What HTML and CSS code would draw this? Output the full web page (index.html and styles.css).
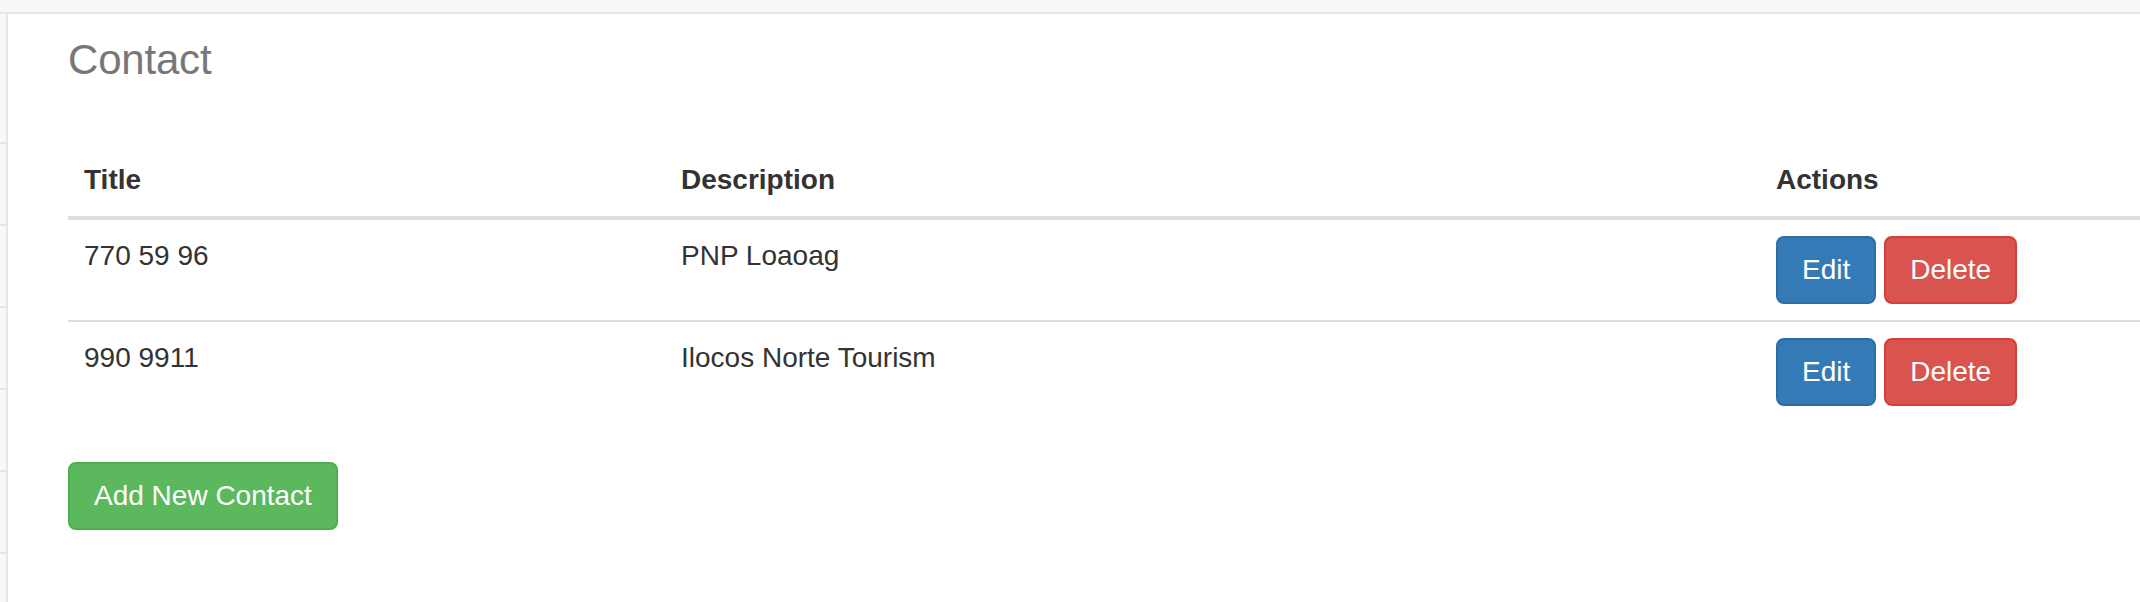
FILE: index.html
```html
<!DOCTYPE html>
<html lang="en">
<head>
<meta charset="utf-8">
<title>Contact</title>
<link rel="stylesheet" href="styles.css">
</head>
<body>
<div class="topbar"></div>
<div class="wrapper">
  <nav class="sidebar">
    <div class="side-search"></div>
    <div class="side-item"></div>
    <div class="side-item"></div>
    <div class="side-item"></div>
    <div class="side-item"></div>
    <div class="side-item"></div>
    <div class="side-item"></div>
  </nav>
  <main class="page">
    <h3 class="page-title">Contact</h3>
    <table class="table">
      <colgroup>
        <col class="col-title">
        <col class="col-desc">
        <col class="col-actions">
      </colgroup>
      <thead>
        <tr><th>Title</th><th>Description</th><th>Actions</th></tr>
      </thead>
      <tbody>
        <tr>
          <td>770 59 96</td>
          <td>PNP Loaoag</td>
          <td><div class="actions"><a class="btn btn-primary">Edit</a><a class="btn btn-danger">Delete</a></div></td>
        </tr>
        <tr>
          <td>990 9911</td>
          <td>Ilocos Norte Tourism</td>
          <td><div class="actions"><a class="btn btn-primary">Edit</a><a class="btn btn-danger">Delete</a></div></td>
        </tr>
      </tbody>
    </table>
    <a class="btn btn-success">Add New Contact</a>
  </main>
</div>
</body>
</html>
```
FILE: styles.css
```css
* { box-sizing: border-box; }
html, body {
  margin: 0;
  padding: 0;
  background: #fff;
}
body {
  font-family: "Liberation Sans", Arial, Helvetica, sans-serif;
  font-size: 28px;
  line-height: 40px;
  color: #333;
  height: 602px;
  overflow: hidden;
}
.topbar {
  height: 14px;
  background: #f8f8f8;
  border-bottom: 2px solid #e7e7e7;
}
.wrapper {
  display: flex;
  height: 588px;
  overflow: hidden;
}
.sidebar {
  width: 8px;
  flex: none;
  background: #f8f8f8;
  border-right: 2px solid #e7e7e7;
  display: flex;
  flex-direction: column;
  overflow: hidden;
}
.side-search {
  height: 130px;
  flex: none;
  border-bottom: 2px solid #e7e7e7;
}
.side-item {
  height: 82px;
  flex: none;
  border-bottom: 2px solid #e7e7e7;
}
.page {
  flex: 1;
  padding: 0 0 0 60px;
  min-width: 0;
}
.page-title {
  margin: 22px 0 0;
  font-size: 42px;
  line-height: 48px;
  font-weight: 400;
  color: #777;
  letter-spacing: -0.2px;
}
.table {
  width: 100%;
  table-layout: fixed;
  border-collapse: collapse;
  border-spacing: 0;
  margin: 60px 0 40px;
}
.col-title { width: 597px; }
.col-desc { width: 1095px; }
.col-actions { width: auto; }
.table th,
.table td {
  padding: 16px;
  text-align: left;
  vertical-align: top;
  line-height: 40px;
}
.table th {
  font-weight: 700;
  vertical-align: bottom;
  border-bottom: 4px solid #ddd;
}
.table tbody tr + tr td {
  border-top: 2px solid #ddd;
}
.actions {
  display: flex;
  gap: 8px;
}
.btn {
  display: inline-block;
  padding: 12px 24px;
  font-size: 28px;
  line-height: 40px;
  border: 2px solid transparent;
  border-radius: 8px;
  color: #fff;
  text-decoration: none;
  white-space: nowrap;
}
.btn-primary { background: #337ab7; border-color: #2e6da4; }
.btn-danger { background: #d9534f; border-color: #d43f3a; }
.btn-success { background: #5cb85c; border-color: #4cae4c; }
```
